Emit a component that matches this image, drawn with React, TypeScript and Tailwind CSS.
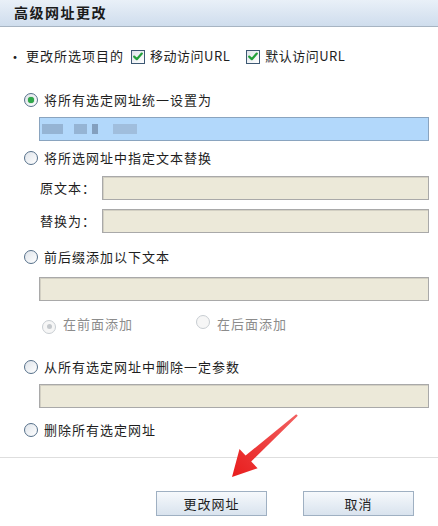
import React from "react";

const font = { fontFamily: '"Noto Sans CJK SC", "Liberation Sans", sans-serif' };

function Radio({ checked = false, disabled = false }: { checked?: boolean; disabled?: boolean }) {
  return (
    <span
      className={
        "relative inline-flex h-[14px] w-[14px] shrink-0 items-center justify-center rounded-full border " +
        (disabled
          ? "border-[#c8cdd2] bg-[#f6f6f6]"
          : "border-[#56708a] bg-gradient-to-br from-[#dfe4ea] to-white")
      }
    >
      {checked && !disabled && <span className="h-[6px] w-[6px] rounded-full bg-[#2fa84a] shadow-[0_0_1px_#2a8a3a]" />}
      {checked && disabled && <span className="h-[5px] w-[5px] rounded-full bg-[#c4c8cc]" />}
    </span>
  );
}

function Check() {
  return (
    <span className="inline-flex h-[14px] w-[14px] shrink-0 items-center justify-center border border-[#3d5873] bg-gradient-to-br from-[#dfe4ea] to-white">
      <svg width="10" height="9" viewBox="0 0 10 9">
        <path d="M1.2 4.6 L3.8 7.2 L8.8 1.6" fill="none" stroke="#22a03a" strokeWidth="2.2" strokeLinejoin="round" strokeLinecap="round" />
      </svg>
    </span>
  );
}

function Field({ className = "" }: { className?: string }) {
  return <div className={"h-[24px] border border-[#a9a9a9] bg-[#ece9d9] shadow-[inset_1px_1px_0_#d3d0c3] " + className} />;
}

export default function App() {
  return (
    <div className="relative h-[526px] w-[438px] overflow-hidden bg-white text-[13px] tracking-[1px] text-[#1e1e1e]" style={font}>
      {/* title bar */}
      <div className="flex h-[27px] items-center border-b border-[#a7b4c2] bg-gradient-to-b from-[#e9f0f8] to-[#cfdded] pb-[2px] pl-[14px] text-[14px] font-bold tracking-[1.5px] text-[#1a1a1a]">
        高级网址更改
      </div>

      {/* row 1 */}
      <div className="mt-[19px] flex h-[20px] items-center pl-[8px]">
        <span className="mr-[3px] text-[14px] leading-none">•</span>
        <span>更改所选项目的</span>
        <span className="ml-[7px]"><Check /></span>
        <span className="ml-[5px] tracking-[0.5px]">移动访问URL</span>
        <span className="ml-[16px]"><Check /></span>
        <span className="ml-[5px] tracking-[0.5px]">默认访问URL</span>
      </div>

      {/* option 1 */}
      <div className="mt-[24px] flex h-[20px] items-center gap-[6px] pl-[24px]">
        <Radio checked />
        <span>将所有选定网址统一设置为</span>
      </div>
      <div className="ml-[39px] mr-[9px] mt-[7px] flex h-[24px] items-center border border-[#8aa4bf] bg-[#b2d8fb] pl-[2px]">
        <span className="h-[10px] w-[21px] bg-[#95b4d4]" />
        <span className="ml-[11px] h-[10px] w-[13px] bg-[#95b4d4]" />
        <span className="ml-[5px] h-[10px] w-[6px] bg-[#839fbe]" />
        <span className="ml-[15px] h-[10px] w-[24px] bg-[#a0bedd]" />
      </div>

      {/* option 2 */}
      <div className="mt-[7px] flex h-[20px] items-center gap-[6px] pl-[24px]">
        <Radio />
        <span>将所选网址中指定文本替换</span>
      </div>
      <div className="mt-[8px] flex items-center pl-[40px] pr-[9px]">
        <span className="w-[62px]">原文本：</span>
        <Field className="flex-1" />
      </div>
      <div className="mt-[9px] flex items-center pl-[40px] pr-[9px]">
        <span className="w-[62px]">替换为：</span>
        <Field className="flex-1" />
      </div>

      {/* option 3 */}
      <div className="mt-[14px] flex h-[20px] items-center gap-[6px] pl-[24px]">
        <Radio />
        <span>前后缀添加以下文本</span>
      </div>
      <Field className="ml-[39px] mr-[9px] mt-[10px]" />
      <div className="mt-[13px] flex h-[20px] items-center text-[#8c8c8c]">
        <span className="ml-[42px]"><Radio checked disabled /></span>
        <span className="ml-[7px]">在前面添加</span>
        <span className="ml-[63px]"><Radio disabled /></span>
        <span className="ml-[7px]">在后面添加</span>
      </div>

      {/* option 4 */}
      <div className="mt-[23px] flex h-[20px] items-center gap-[6px] pl-[24px]">
        <Radio />
        <span>从所有选定网址中删除一定参数</span>
      </div>
      <Field className="ml-[39px] mr-[9px] mt-[7px]" />

      {/* option 5 */}
      <div className="mt-[12px] flex h-[20px] items-center gap-[6px] pl-[24px]">
        <Radio />
        <span>删除所有选定网址</span>
      </div>

      {/* divider */}
      <div className="mt-[17px] h-px bg-[#dedede]" />

      {/* buttons */}
      <div className="mt-[33px] flex gap-[36px] pl-[156px]">
        <button className="flex h-[25px] w-[111px] items-center justify-center border border-[#9fb0c2] bg-gradient-to-b from-[#f6f9fc] to-[#d9e3ee] text-[13px] tracking-[1px] text-[#1e1e1e]" style={font}>
          更改网址
        </button>
        <button className="flex h-[25px] w-[111px] items-center justify-center border border-[#9fb0c2] bg-gradient-to-b from-[#f6f9fc] to-[#d9e3ee] text-[13px] tracking-[1px] text-[#1e1e1e]" style={font}>
          取消
        </button>
      </div>

      {/* red annotation arrow */}
      <svg className="pointer-events-none absolute left-0 top-0" width="438" height="526" viewBox="0 0 438 526">
        <defs>
          <linearGradient id="ag" x1="297" y1="415" x2="232" y2="477" gradientUnits="userSpaceOnUse">
            <stop offset="0" stopColor="#f26060" />
            <stop offset="1" stopColor="#e81c1c" />
          </linearGradient>
        </defs>
        <polygon
          points="296.2,414.3 245.6,455.6 239.5,449.0 232,477 257.6,468.2 251.2,461.4 297.8,415.8"
          fill="url(#ag)"
        />
      </svg>
    </div>
  );
}
